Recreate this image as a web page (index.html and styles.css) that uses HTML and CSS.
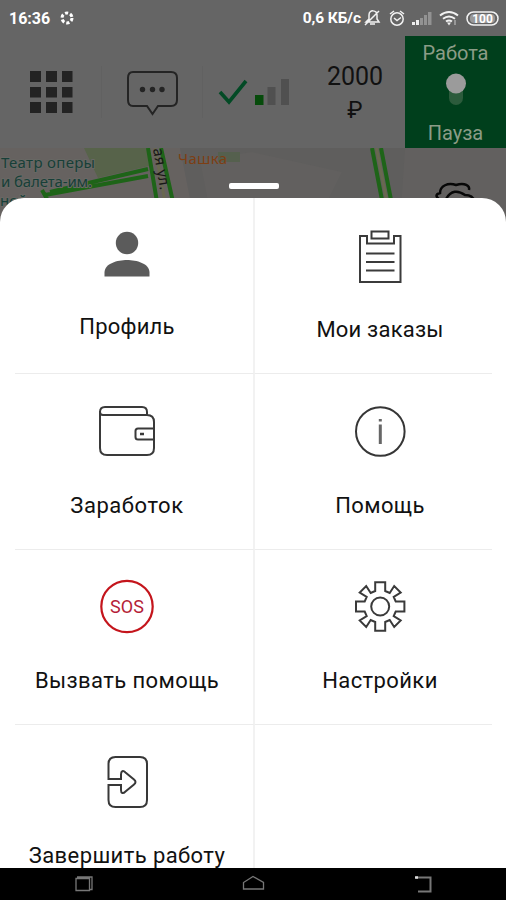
FILE: index.html
```html
<!DOCTYPE html>
<html lang="ru">
<head>
<meta charset="utf-8">
<title>Меню</title>
<link rel="stylesheet" href="styles.css">
</head>
<body>
<div class="screen">
  <header class="status">
    <span class="time">16:36</span>
    <svg class="spinner" width="14" height="14" viewBox="0 0 14 14"><circle cx="7" cy="7" r="5" fill="none" stroke="#fff" stroke-width="3" stroke-dasharray="3.2 2.04"/></svg>
    <span class="speed">0,6 КБ/с</span>
    <svg width="136" height="24" viewBox="363 6 136 24" fill="none" stroke="#f2f2f2" stroke-width="1.5">
      <path d="M366 22h13l-2-3v-4c0-5-8-6-8 0v4zM370 24h5M379 11l-14 14"/>
      <circle cx="397" cy="19" r="6.2"/><path d="M390 14l4-3M404 14l-4-3M394 18l3 2.500 4-3"/>
      <g stroke="none" fill="#eee"><path d="M412 22h3v3h-3zM416 20h3v5h-3z"/><path fill="#929292" d="M420 18h3v7h-3zM424 15h3v10h-3zM428 12h3.500v13H428z"/></g>
      <path d="M440 15.500q9-7 18 0M443 18.800q6-4.600 12 0M446 21.500q3-2.200 6 0" stroke-width="2"/><path d="M447 22.500h4l-2 3z" fill="#eee" stroke="none"/><path d="M455 20v5" stroke="#aaa"/>
      <rect x="467" y="12" width="31" height="13" rx="6.500"/>
      <rect x="470" y="14" width="25" height="9" rx="4" fill="#999" stroke="none"/>
      <text class="battery" x="482.500" y="23">100</text>
    </svg>
  </header>
  <div class="toolbar">
    <div class="tool">
      <svg width="44" height="44" viewBox="29 70 44 44" fill="#232323"><path d="M30 71h11v11H30zM46 71h11v11H46zM62 71h10.500v11H62zM30 87h11v10.500H30zM46 87h11v10.500H46zM62 87h10.500v10.500H62zM30 102h11v11H30zM46 102h11v11H46zM62 102h10.500v11H62z"/></svg>
    </div>
    <div class="tool">
      <svg width="54" height="48" viewBox="126 69 54 48"><path d="M133 73h38q6 0 6 6v22q0 6-6 6h-13l-5.500 8-5.500-8h-14q-5 0-5-6V79q0-6 5-6z" fill="none" stroke="#242424" stroke-width="2"/><g fill="#242424"><circle cx="142.500" cy="90.500" r="2.700"/><circle cx="152.500" cy="90.500" r="2.700"/><circle cx="162" cy="90.500" r="2.700"/></g></svg>
    </div>
    <div class="tool">
      <svg width="74" height="40" viewBox="218 72 74 40"><path d="M221 92l9 10 17-21" fill="none" stroke="#024a25" stroke-width="3.600"/><path fill="#064b0b" d="M256 95h8.500v10H256z"/><path fill="#505050" d="M268.500 87h8v18h-8zM282 79h8v26h-8z"/></svg>
    </div>
    <div class="balance"><span>2000</span><span class="ruble">₽</span></div>
    <div class="mode">
      <span>Работа</span>
      <svg width="24" height="36" viewBox="444 71 24 36"><path d="M449 86h14v11a7 7 0 0 1-14 0z" fill="#2c5b3c"/><circle cx="456" cy="82.500" r="10" fill="#9b9b9b"/></svg>
      <span>Пауза</span>
    </div>
  </div>
  <div class="map">
    <svg width="506" height="76" viewBox="0 148 506 76">
      <path fill="#666260" d="M0 148h506v76H0z"/>
      <path fill="#5f5e5d" d="M180 148h225v76H195z"/>
      <path fill="#62605f" d="M200 160l52-8 90 20-20 40H210zM405 148h101v76H400z"/>
      <path fill="#57634a" d="M84 148h63l2 18-51 12z"/>
      <path fill="#55604e" d="M218 152h22v10h-22z"/>
      <g fill="none" stroke="#1e6418" stroke-width="4">
        <path d="M50 192l98-23M45 195l103-19M42 190l5 9M148 148l9 54M161 148l12 54"/>
        <path d="M372 148l10 52M381 148l10 52"/>
      </g>
      <path d="M155 148l10 54M376.500 148l10 52" stroke="#696850" stroke-width="3"/>
      <g class="place" paint-order="stroke"><text x="1" y="168" textLength="94">Театр оперы</text><text x="1" y="187" textLength="91">и балета-им.</text><text x="0" y="206">ной</text></g>
      <text class="cafe" x="178" y="164" textLength="49">Чашка</text>
      <text class="street" transform="translate(153 149) rotate(80)" textLength="42">ая ул.</text>
      <path d="M440 200q-7-5 0-7c0-7 8-11 16-8 9-3 14 1 13 5M446 199c5-9 12-9 19-4q8 0 9 6" fill="none" stroke="#080808" stroke-width="2.500"/>
    </svg>
    <span class="handle"></span>
  </div>
  <main class="sheet">
    <div class="grid">
      <div class="item">
        <svg width="64" height="64" viewBox="95 223 64 64" fill="#5b5b5b"><circle cx="127" cy="243" r="11.200"/><path d="M104.500 276.500v-4c0-9 13-12.500 22.500-12.500s22.500 3.500 22.500 12.500v4z"/></svg>
        <span class="label profile">Профиль</span>
      </div>
      <div class="item">
        <svg width="64" height="64" viewBox="348 223 64 64" fill="none" stroke="#3b3b3b" stroke-width="2"><path d="M367 236h-7v46h40.500v-46H394v7.500h-27zM371.500 231.500h17v7h-17zM366 253.500h28.500M366 262h28.500M366 270.500h28.500"/></svg>
        <span class="label orders">Мои заказы</span>
      </div>
      <div class="item">
        <svg width="64" height="64" viewBox="95 400 64 64" fill="none" stroke="#3a3a3a" stroke-width="2"><path d="M100 411v37q0 7 7 7h40q7 0 7-7v-26q0-7-7-7h-44q-3 0-3-3 0-5 5-5h37q5 0 5 5v3M154 428.500h-16q-2.500 0-2.500 2.500v6q0 2.500 2.500 2.500h16"/><path d="M140 434h4" stroke-width="2.500"/></svg>
        <span class="label earnings">Заработок</span>
      </div>
      <div class="item">
        <svg width="64" height="64" viewBox="348 400 64 64"><circle cx="380.300" cy="431.500" r="24.300" fill="none" stroke="#363636" stroke-width="2"/><path d="M380.300 424.500v19.500M380.300 419v2.500" stroke="#666" stroke-width="3"/></svg>
        <span class="label help">Помощь</span>
      </div>
      <div class="item">
        <svg width="64" height="64" viewBox="95 575 64 64"><circle cx="127" cy="606.500" r="25.700" fill="none" stroke="#c4151c" stroke-width="2.200"/><text class="sos" x="127" y="613" textLength="34">SOS</text></svg>
        <span class="label emergency">Вызвать помощь</span>
      </div>
      <div class="item">
        <svg width="64" height="64" viewBox="-32.200 -31.500 64 64" fill="none" stroke="#3a3a3a" stroke-width="2"><path d="M-5-24.200H5V-15.500L9.500-13.500 14-20.500 20.500-14 13.500-9.500 15.500-5H24.200V5H15.500L13.500 9.500 20.500 14 14 20.500 9.500 13.500 5 15.500V24.200H-5V15.500L-9.500 13.500-14 20.500-20.500 14-13.500 9.500-15.500 5H-24.200V-5H-15.500L-13.500-9.500-20.500-14-14-20.500-9.500-13.500-5-15.500z"/><circle r="9"/></svg>
        <span class="label settings">Настройки</span>
      </div>
      <div class="item last">
        <svg width="64" height="64" viewBox="95 750 64 64" fill="none" stroke="#383838" stroke-width="2"><path d="M108.500 779v-15q0-7 7-7H140q7 0 7 7v36q0 7-7 7h-24.500q-7 0-7-7v-15H121v5c0 3.500 2 4 4.500 1.500l8.500-7q3-2.500 0-5l-8.500-7c-2.500-2.500-4.500-1.500-4.500 2v4.500z"/></svg>
        <span class="label finish">Завершить работу</span>
      </div>
      <div class="item last"></div>
    </div>
  </main>
  <nav class="nav">
    <svg width="506" height="32" viewBox="0 868 506 32" fill="none" stroke="#777" stroke-width="1.300"><path d="M76 878.500h13.500v12H76zM77 877h15v12.500h-2"/><path d="M243.500 889v-6.500l9.500-6 10.500 6v6.500z"/><path d="M416 877.500h14.500v14H418" stroke-width="2"/><path d="M415 877.500h3" stroke="#ddd" stroke-width="2.500"/></svg>
  </nav>
</div>
</body>
</html>
```
FILE: styles.css
```css
* { box-sizing: border-box; }
body { margin: 0; font-family: Roboto, "Liberation Sans", sans-serif; }
svg { display: block; flex: none; }
.screen { width: 506px; height: 900px; display: flex; flex-direction: column; overflow: hidden; background: #656565; }

.status { height: 36px; display: flex; align-items: center; padding: 0 7px 0 9px; color: #fff; font-weight: 700; font-size: 16px; }
.time { width: 42px; font-size: 16px; }
.spinner { margin-left: 9px; }
.speed { margin-left: auto; margin-right: 2px; font-size: 15.5px; letter-spacing: -0.1px; }
.battery { font-size: 12px; font-weight: 700; text-anchor: middle; fill: #fff; stroke: none; }

.toolbar { height: 112px; display: grid; grid-template-columns: 102px 101px 102px 100px 101px; }
.tool { display: flex; align-items: center; justify-content: center; background: linear-gradient(#616161, #616161) right center / 1px 52px no-repeat; }
.tool:nth-child(3) { background: none; }
.balance { display: flex; flex-direction: column; align-items: center; padding-top: 24px; font-size: 25px; line-height: 34px; color: #111; }
.ruble { font-size: 23px; }
.mode { display: flex; flex-direction: column; align-items: center; justify-content: space-between; padding: 5px 0 3px; background: #003f1c; color: #8b9c87; font-size: 20px; line-height: 24px; }
.mode svg { margin-bottom: 6px; }

.map { position: relative; height: 50px; }
.handle { position: absolute; left: 229px; top: 35px; width: 50px; height: 6px; border-radius: 2px; background: #fff; }
.place { font: 15px "Noto Sans", sans-serif; fill: #173f38; stroke: #686864; stroke-width: 2px; }
.cafe { font: 15px "Noto Sans", sans-serif; fill: #7d3f14; }
.street { font: 15px "Noto Sans", sans-serif; fill: #171717; }

.sheet { position: relative; height: 670px; padding: 0 14px 0 15px; border-radius: 24px 24px 0 0; background: #fff; overflow: hidden; }
.grid { display: grid; grid-template-columns: 240px 237px; grid-template-rows: 176px 176px 175px 143px; }
.item { display: flex; flex-direction: column; align-items: center; padding-top: 25px; border-bottom: 1px solid #ececec; }
.item:nth-child(odd) { border-right: 2px solid #f2f2f2; padding-right: 14px; }
.item:nth-child(even) { padding-left: 13px; }
.item:nth-child(3), .item:nth-child(4) { padding-top: 26px; }
.item.last { border-bottom: 0; }
.label { margin-top: 29px; font-size: 22px; line-height: 26px; letter-spacing: 0.4px; color: #111; white-space: nowrap; }
.profile { margin-top: 27px; letter-spacing: 0.2px; }
.orders { margin-top: 30px; letter-spacing: 0.2px; }
.earnings { letter-spacing: 0.55px; }
.sos { font-size: 18px; text-anchor: middle; fill: #b51e38; }

.nav { height: 32px; background: #000; }
```
